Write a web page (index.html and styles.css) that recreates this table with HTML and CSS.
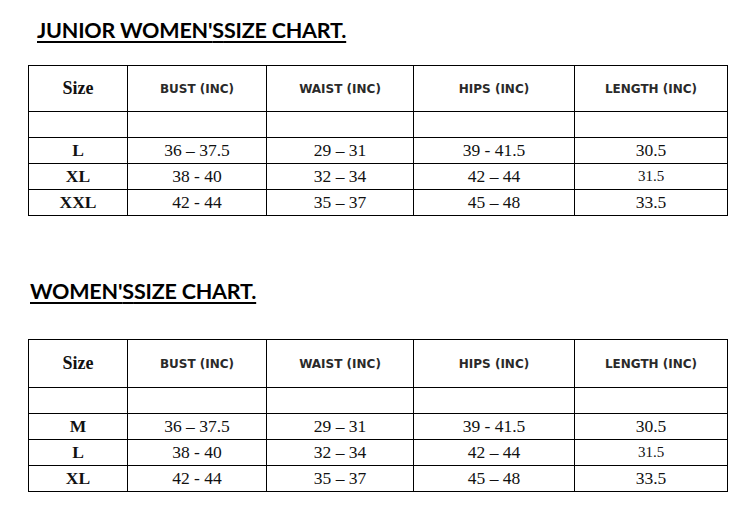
FILE: index.html
```html
<!DOCTYPE html>
<html>
<head>
<meta charset="utf-8">
<link rel="stylesheet" href="styles.css">
</head>
<body>
<div class="page">
  <section class="chart chart-junior">
    <h2 class="title">JUNIOR WOMEN'<span class="tight">S </span>SIZE CHART.</h2>
    <table class="sizes">
      <colgroup>
        <col class="c-size"><col class="c-bust"><col class="c-waist"><col class="c-hips"><col class="c-length">
      </colgroup>
      <tr class="head">
        <td class="size-h">Size</td><td class="mh">BUST (INC)</td><td class="mh">WAIST (INC)</td><td class="mh">HIPS (INC)</td><td class="mh">LENGTH (INC)</td>
      </tr>
      <tr class="row"><td></td><td></td><td></td><td></td><td></td></tr>
      <tr class="row"><td class="sz">L</td><td>36 – 37.5</td><td>29 – 31</td><td>39 - 41.5</td><td>30.5</td></tr>
      <tr class="row"><td class="sz">XL</td><td>38 - 40</td><td>32 – 34</td><td>42 – 44</td><td class="small">31.5</td></tr>
      <tr class="row"><td class="sz">XXL</td><td>42 - 44</td><td>35 – 37</td><td>45 – 48</td><td>33.5</td></tr>
    </table>
  </section>
  <section class="chart chart-women">
    <h2 class="title">WOMEN'<span class="tight">S </span>SIZE CHART.</h2>
    <table class="sizes">
      <colgroup>
        <col class="c-size"><col class="c-bust"><col class="c-waist"><col class="c-hips"><col class="c-length">
      </colgroup>
      <tr class="head">
        <td class="size-h">Size</td><td class="mh">BUST (INC)</td><td class="mh">WAIST (INC)</td><td class="mh">HIPS (INC)</td><td class="mh">LENGTH (INC)</td>
      </tr>
      <tr class="row"><td></td><td></td><td></td><td></td><td></td></tr>
      <tr class="row"><td class="sz">M</td><td>36 – 37.5</td><td>29 – 31</td><td>39 - 41.5</td><td>30.5</td></tr>
      <tr class="row"><td class="sz">L</td><td>38 - 40</td><td>32 – 34</td><td>42 – 44</td><td class="small">31.5</td></tr>
      <tr class="row"><td class="sz">XL</td><td>42 - 44</td><td>35 – 37</td><td>45 – 48</td><td>33.5</td></tr>
    </table>
  </section>
</div>
</body>
</html>
```

FILE: styles.css
```css
html, body {
  margin: 0;
  padding: 0;
  background: #ffffff;
}

.page {
  width: 749px;
  height: 505px;
  padding: 0 0 0 28px;
  box-sizing: border-box;
  overflow: hidden;
}

.chart-junior {
  padding-top: 17px;
}

.chart-women {
  padding-top: 62px;
}

.title {
  margin: 0;
  font-family: "Lato", "Open Sans", sans-serif;
  font-weight: 700;
  font-size: 21.5px;
  line-height: 26px;
  color: #000;
  letter-spacing: -0.2px;
  text-decoration: underline;
  text-decoration-thickness: 2px;
  text-underline-offset: 3px;
}

.title .tight {
  word-spacing: -5px;
}

.chart-junior .title {
  margin-left: 9px;
  margin-bottom: 22px;
}

.chart-women .title {
  margin-left: 2px;
  margin-bottom: 35px;
}

.sizes {
  border-collapse: collapse;
  table-layout: fixed;
  width: 699px;
}

.c-size { width: 99px; }
.c-bust { width: 139px; }
.c-waist { width: 147px; }
.c-hips { width: 161px; }
.c-length { width: 153px; }

.sizes td {
  border: 1px solid #000;
  padding: 0;
  text-align: center;
  vertical-align: middle;
  font-family: "Liberation Serif", "Times New Roman", serif;
  font-size: 17.5px;
  color: #111;
}

.head td {
  height: 45px;
}

.chart-women .head td {
  height: 47px;
}

.row td {
  height: 25px;
}

.sizes td.size-h {
  font-weight: 700;
  font-size: 18px;
}

.sizes td.mh {
  font-family: "DejaVu Sans", Verdana, sans-serif;
  font-weight: 700;
  font-size: 12px;
  color: #2a2a2a;
}

.sz {
  font-weight: 700;
}

.sizes td.small {
  font-size: 15px;
}
```
